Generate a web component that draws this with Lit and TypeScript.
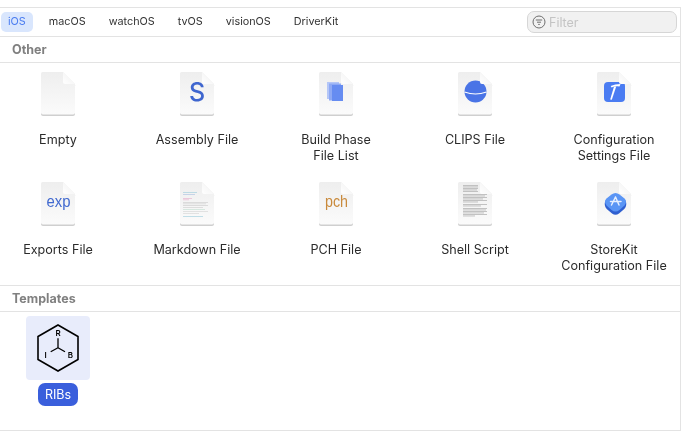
import { LitElement, html, css, svg } from "lit";
import { customElement } from "lit/decorators.js";

const FONT_SVG = "Inter, 'Liberation Sans', sans-serif";
const FONT_THIN = "'Liberation Sans', sans-serif";

const lines = (rows: [number, number, number, string][], h = 0.7) =>
  rows.map(([x, y, w, c]) => svg`<rect x=${x} y=${y} width=${w} height=${h} fill=${c}></rect>`);

const shellRows: [number, number][] = [
  [4, 15], [5.5, 15], [7, 15], [8.5, 14], [10, 15],
  [13, 24], [14.5, 22], [16, 24], [17.5, 20], [19, 24], [20.5, 15],
  [23, 24], [24.5, 18],
  [27, 24], [28.5, 23], [30, 24], [31.5, 21], [33, 24], [34.5, 12],
];

const overlays: Record<string, unknown> = {
  empty: svg``,
  s: svg`<text x="18" y="30" text-anchor="middle" font-size="25" font-weight="500" font-family=${FONT_SVG} fill="#3f66cf">S</text>`,
  pages: svg`
    <rect x="9" y="11" width="12" height="17" fill="#b4c6f7"></rect>
    <rect x="11" y="12.5" width="12" height="17" fill="#8ea9f4"></rect>
    <rect x="14" y="14" width="11" height="16" fill="#668cf1"></rect>`,
  sphere: svg`
    <circle cx="18.5" cy="20.5" r="11" fill="#4a74e6"></circle>
    <path d="M7.5 21 Q18.5 25 29.5 21" fill="none" stroke="#fff" stroke-width="1.2"></path>`,
  hammer: svg`
    <rect x="8" y="11" width="21" height="20" rx="4" fill="#4a7cf2"></rect>
    <path d="M18 15.5 L20.2 15.5 L15.8 28.8 L14.2 28.4 Z" fill="#fff"></path>
    <path d="M14.7 15 Q19 13 24.5 13 L23.5 15.4 Q19 14.8 15.6 16.4 Z" fill="#fff"></path>`,
  exp: svg`<text x="18.5" y="25.6" text-anchor="middle" font-size="16.5" textLength="24" lengthAdjust="spacingAndGlyphs" font-family=${FONT_THIN} fill="#4169cf">exp</text>`,
  md: svg`<g opacity="0.75">${lines([
    [4, 11, 14, "#8fc6d8"], [4, 13, 12, "#9fb8e0"], [4, 17, 9, "#e3a3c6"], [4, 18.5, 6, "#e3a3c6"],
    [4, 21, 25, "#c4c4c4"], [4, 22.5, 23, "#c9c9c9"], [4, 24, 25, "#c4c4c4"], [4, 26, 20, "#c8c8c8"],
    [4, 28, 22, "#b9dccb"], [4, 30, 25, "#cfcfcf"], [4, 32, 16, "#cfcfcf"], [4, 35, 20, "#8fc6d8"],
  ])}</g>`,
  pch: svg`<text x="18.5" y="25.6" text-anchor="middle" font-size="16.5" textLength="23" lengthAdjust="spacingAndGlyphs" font-family=${FONT_THIN} fill="#c98a3c">pch</text>`,
  shell: svg`${lines(
    shellRows.map(([y, w]) => [6, y, w, "#bbbbbb"] as [number, number, number, string]),
    0.9
  )}`,
  kit: svg`
    <path d="M15.5 14.5 Q19.5 11.5 23.5 14.5 L28.5 18.5 Q31 21 30 25 Q29.5 27 28 28.2 L23 32.5 Q19.5 35 16 32.5 L11 28.2 Q9.5 27 9 25 Q8 21 10.5 18.5 Z" fill="#2f5fd0"></path>
    <path d="M15.5 13.5 Q19.5 10.5 23.5 13.5 L28.5 17.5 Q31.5 20.5 28.5 24.5 L23.5 29 Q19.5 32 15.5 29 L10.5 24.5 Q7.5 20.5 10.5 17.5 Z" fill="#5a95f5"></path>
    <path d="M19.5 16 L15.5 24 M19.5 16 L23 24 M14.5 20.5 L25 20.5" stroke="#e6efff" stroke-width="1.5" stroke-linecap="round" fill="none"></path>`,
};

const fileIcon = (kind: string) => html`
  <svg class="file" width="38" height="46" viewBox="-1 0 38 46">
    <defs>
      <linearGradient id="pg" x1="0" y1="0" x2="0" y2="1">
        <stop offset="0" stop-color="#eeeeee"></stop>
        <stop offset="1" stop-color="#fbfbfb"></stop>
      </linearGradient>
      <linearGradient id="fd" x1="0" y1="1" x2="1" y2="0">
        <stop offset="0" stop-color="#ffffff"></stop>
        <stop offset="0.5" stop-color="#f7f7f7"></stop>
        <stop offset="1" stop-color="#dcdcdc"></stop>
      </linearGradient>
    </defs>
    <path d="M2.5 1.5 H23 L35 13.5 V42 Q35 44 33 44 H3 Q1 44 1 42 V3 Q1 1.5 2.5 1.5 Z" fill="#cfcfcf" transform="translate(0 1)"></path>
    <path d="M2.5 1 H23 L35 13 V41.5 Q35 43.5 33 43.5 H3 Q1 43.5 1 41.5 V3 Q1 1 2.5 1 Z" fill="url(#pg)"></path>
    ${overlays[kind]}
    <path d="M23 1 L35 13 H25 Q23 13 23 11 Z" fill="url(#fd)"></path>
  </svg>
`;

const ITEMS: [string, string][] = [
  ["empty", "Empty"],
  ["s", "Assembly File"],
  ["pages", "Build Phase\nFile List"],
  ["sphere", "CLIPS File"],
  ["hammer", "Configuration\nSettings File"],
  ["exp", "Exports File"],
  ["md", "Markdown File"],
  ["pch", "PCH File"],
  ["shell", "Shell Script"],
  ["kit", "StoreKit\nConfiguration File"],
];

const TABS = ["iOS", "macOS", "watchOS", "tvOS", "visionOS", "DriverKit"];

@customElement("app-root")
export class AppRoot extends LitElement {
  static styles = css`
    :host {
      display: block;
      width: 687px;
      height: 431px;
      background: #fff;
      font-family: Inter, "Liberation Sans", sans-serif;
      color: #2b2b2b;
      overflow: hidden;
    }
    .frame {
      box-sizing: border-box;
      width: 681px;
      height: 424px;
      margin-top: 7px;
      border: 1px solid #e3e3e3;
      border-left: none;
      display: flex;
      flex-direction: column;
      will-change: transform;
    }
    .toolbar {
      height: 28px;
      flex: none;
      display: flex;
      align-items: center;
      padding: 0 3px 0 1px;
      border-bottom: 1px solid #e3e3e3;
    }
    .tabs {
      display: flex;
      gap: 9px;
    }
    .tab {
      height: 20px;
      line-height: 20px;
      padding: 0 7px;
      font-size: 10.8px;
      border-radius: 5px;
      color: #333;
    }
    .tab.on {
      background: #d9e6fd;
      color: #4a7cf0;
    }
    .filter {
      margin-left: auto;
      box-sizing: border-box;
      width: 150px;
      height: 22px;
      display: flex;
      align-items: center;
      gap: 3px;
      padding-left: 4px;
      background: #f1f1f1;
      border: 1px solid #d6d6d6;
      border-radius: 7px;
      color: #c4c4c4;
      font-size: 12.5px;
    }
    .head {
      height: 26px;
      flex: none;
      box-sizing: border-box;
      padding-left: 12px;
      display: flex;
      align-items: center;
      border-bottom: 1px solid #e3e3e3;
      font-size: 12.5px;
      font-weight: 700;
      color: #808080;
    }
    .grid {
      box-sizing: border-box;
      flex: none;
      height: 223px;
      padding-top: 8px;
      display: grid;
      grid-template-columns: repeat(5, 116px);
      grid-auto-rows: 103px;
      column-gap: 23px;
      row-gap: 7px;
      border-bottom: 1px solid #e3e3e3;
    }
    .cell {
      display: flex;
      flex-direction: column;
      align-items: center;
    }
    .file {
      display: block;
    }
    .label {
      margin-top: 15px;
      font-size: 12.6px;
      line-height: 16px;
      text-align: center;
      white-space: pre-line;
    }
    .templates {
      flex: 1;
      padding-top: 4px;
    }
    .rib {
      width: 116px;
      display: flex;
      flex-direction: column;
      align-items: center;
    }
    .tile {
      width: 64px;
      height: 64px;
      border-radius: 4px;
      background: #e8ecfb;
      display: flex;
      align-items: center;
      justify-content: center;
    }
    .pill {
      margin-top: 3px;
      height: 23px;
      line-height: 23px;
      padding: 0 7px;
      border-radius: 7px;
      background: #3a5fdc;
      color: #fff;
      font-size: 12.5px;
    }
  `;

  render() {
    return html`
      <div class="frame">
        <div class="toolbar">
          <div class="tabs">
            ${TABS.map((t, i) => html`<div class="tab ${i === 0 ? "on" : ""}">${t}</div>`)}
          </div>
          <div class="filter">
            <svg width="14" height="14" viewBox="0 0 14 14" fill="none" stroke="#6e6e6e" stroke-width="1">
              <circle cx="7" cy="7" r="6"></circle>
              <path d="M3.8 5H10.2M5 7.2H9M6.2 9.4H7.8"></path>
            </svg>
            <span>Filter</span>
          </div>
        </div>
        <div class="head">Other</div>
        <div class="grid">
          ${ITEMS.map(
            ([k, l]) => html`<div class="cell">${fileIcon(k)}<div class="label">${l}</div></div>`
          )}
        </div>
        <div class="head">Templates</div>
        <div class="templates">
          <div class="rib">
            <div class="tile">
              <svg width="44" height="48" viewBox="0 0 44 48" fill="none" stroke="#000" stroke-width="1.6">
                <path d="M22 1 L42 12.5 V35.5 L22 47 L2 35.5 V12.5 Z" stroke-linejoin="miter"></path>
                <path d="M22 14.3 V23.7 M22 23.7 L14.7 27.7 M22 23.7 L29 27.7" stroke-width="1.3"></path>
                <text x="22" y="12" text-anchor="middle" font-size="8" font-weight="600" fill="#000" stroke="none" font-family=${FONT_SVG}>R</text>
                <text x="9.7" y="34" text-anchor="middle" font-size="8" font-weight="600" fill="#000" stroke="none" font-family=${FONT_SVG}>I</text>
                <text x="34.3" y="34" text-anchor="middle" font-size="8" font-weight="600" fill="#000" stroke="none" font-family=${FONT_SVG}>B</text>
              </svg>
            </div>
            <div class="pill">RIBs</div>
          </div>
        </div>
      </div>
    `;
  }
}
